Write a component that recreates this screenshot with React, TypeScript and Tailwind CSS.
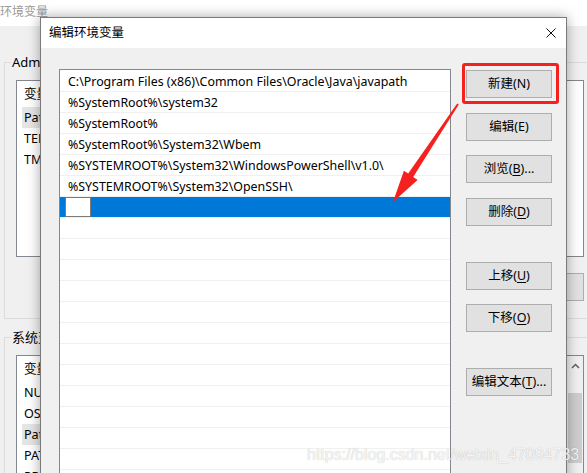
import React from 'react'

const paths = [
  'C:\\Program Files (x86)\\Common Files\\Oracle\\Java\\javapath',
  '%SystemRoot%\\system32',
  '%SystemRoot%',
  '%SystemRoot%\\System32\\Wbem',
  '%SYSTEMROOT%\\System32\\WindowsPowerShell\\v1.0\\',
  '%SYSTEMROOT%\\System32\\OpenSSH\\',
]

const userVars = ['Path', 'TEMP', 'TMP']
const sysVars = ['NUMBER_OF_PROCESSORS', 'OS', 'Path', 'PATHEXT', 'PROCESSOR_ARCHITECTURE']

const Btn = ({ label, hot, rest, className = '' }: { label: string; hot?: string; rest?: string; className?: string }) => (
  <div className={`relative h-[28px] w-[86px] flex items-center justify-center border border-[#adadad] bg-[#e1e1e1] text-[12.5px] text-black ${className}`}>
    <span>
      {label}
      {hot && (
        <>
          (<span className="underline underline-offset-2">{hot}</span>){rest}
        </>
      )}
    </span>
  </div>
)

const VarList = ({ rows, hi, scroll }: { rows: string[]; hi: number; scroll?: boolean }) => (
  <div className="relative w-[568px] h-[177px] border border-[#828790] bg-white text-[12.6px]">
    <div className="h-[26px] pl-[7px] leading-[26px] flex gap-[120px]">
      <span>变量</span>
      <span>值</span>
    </div>
    {rows.map((r, i) => (
      <div
        key={r + i}
        className={`ml-[5px] mr-[20px] h-[21px] pl-[2px] leading-[21px] ${i === hi ? 'bg-[#e5e5e5]' : ''}`}
      >
        {r}
      </div>
    ))}
    {scroll && (
      <div className="absolute right-0 top-0 bottom-0 w-[16px] bg-[#f0f0f0] flex flex-col items-center">
        <svg width="9" height="6" viewBox="0 0 9 6" className="mt-[7px]">
          <path d="M1 5 L4.5 1.5 L8 5" fill="none" stroke="#606060" strokeWidth="1.5" />
        </svg>
        <div className="mt-[24px] w-[14px] h-[70px] bg-[#cdcdcd]" />
      </div>
    )}
  </div>
)

export default function App() {
  return (
    <div className="relative w-[587px] h-[473px] overflow-hidden bg-[#f0f0f0] text-[12px] text-black font-['Noto_Sans','Noto_Sans_CJK_SC',sans-serif]">
      {/* 环境变量 window behind the dialog */}
      <div className="h-[26px] bg-white leading-[24px] text-[#9a9a9a]">环境变量</div>
      <div className="px-[4px]">
        <div className="relative mt-[36px] h-[257px] w-[620px] border border-[#dcdcdc] pl-[11px] pt-[17px]">
          <span className="absolute -top-[10px] left-[6px] bg-[#f0f0f0] px-[1px] text-[13px] leading-[18px]">Administrator 的用户变量(U)</span>
          <VarList rows={userVars} hi={0} />
          <div className="mt-[16px] w-[568px] flex justify-end gap-[10px]">
            <div className="h-[28px] w-[80px] border border-[#adadad] bg-[#e1e1e1]" />
          </div>
        </div>
        <div className="relative mt-[18px] h-[200px] w-[620px] border border-[#dcdcdc] pl-[11px] pt-[17px]">
          <span className="absolute -top-[10px] left-[6px] bg-[#f0f0f0] px-[1px] text-[13px] leading-[18px]">系统变量(S)</span>
          <VarList rows={sysVars} hi={2} scroll />
        </div>
      </div>

      {/* 编辑环境变量 dialog */}
      <div className="absolute left-[40px] top-[17px] w-[527px] h-[470px] flex flex-col border border-[#7a7a7a] bg-[#f0f0f0] shadow-[0_0_12px_rgba(0,0,0,0.35)]">
        <div className="h-[30px] shrink-0 flex items-center justify-between bg-white pl-[8px] pr-[10px]">
          <span className="text-[12.5px]">编辑环境变量</span>
          <svg width="10" height="10" viewBox="0 0 10 10">
            <path d="M0.5 0.5 L9.5 9.5 M9.5 0.5 L0.5 9.5" stroke="#111" strokeWidth="1" />
          </svg>
        </div>
        <div className="flex pl-[18px] pt-[21px]">
          <div className="w-[392px] h-[420px] border border-[#828790] bg-white pt-[1px] text-[12.4px]">
            {paths.map((p) => (
              <div key={p} className="h-[21px] border-b border-[#f0f0f0] pl-[8px] pt-[1px] leading-[19px] whitespace-nowrap">
                {p}
              </div>
            ))}
            <div className="h-[21px] border-b border-[#f0f0f0] bg-[#0078d7] pl-[5px]">
              <div className="h-[20px] w-[26px] border border-[#7a7a7a] bg-white" />
            </div>
            {Array.from({ length: 12 }).map((_, i) => (
              <div key={i} className="h-[21px] border-b border-[#f0f0f0]" />
            ))}
          </div>
          <div className="ml-[15px] flex flex-col pt-[1px]">
            <div className="relative">
              <Btn label="新建(N)" />
              <div className="absolute -left-[4px] -right-[7px] -top-[7px] -bottom-[6px] rounded-[3px] border-[3px] border-[#f5211e]" />
            </div>
            <Btn label="编辑(E)" className="mt-[15px]" />
            <Btn label="浏览" hot="B" rest="..." className="mt-[14px]" />
            <Btn label="删除" hot="D" className="mt-[15px]" />
            <Btn label="上移" hot="U" className="mt-[36px]" />
            <Btn label="下移" hot="O" className="mt-[14px]" />
            <Btn label="编辑文本" hot="T" rest="..." className="mt-[36px]" />
          </div>
        </div>
      </div>

      {/* red pointer */}
      <svg className="absolute left-0 top-0 pointer-events-none" width="587" height="473" viewBox="0 0 587 473">
        <polygon
          points="458.8,104.6 413.2,177 417.6,179.9 393,202 403.9,170.8 408.2,173.6 457.2,103.4"
          fill="#f5211e"
        />
      </svg>

      <div className="absolute left-[307px] top-[445px] text-[16px] leading-[20px] text-white/85 font-['Liberation_Sans',Arial,sans-serif] [text-shadow:0_0_1px_rgba(0,0,0,0.3)]">
        https://blog.csdn.net/weixin_47094733
      </div>
    </div>
  )
}
